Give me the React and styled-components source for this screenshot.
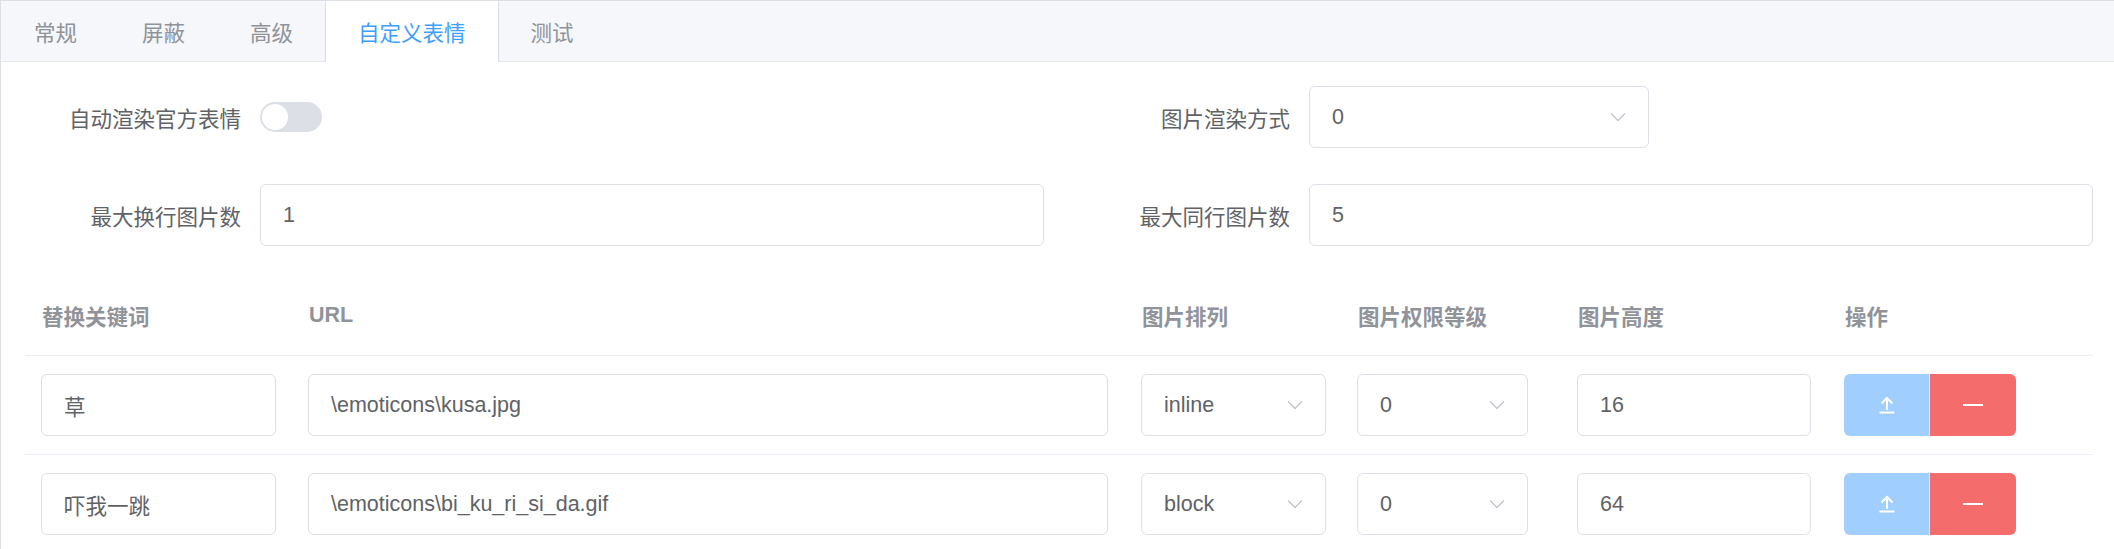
import React from 'react';
import styled, { createGlobalStyle } from 'styled-components';

const GlobalStyle = createGlobalStyle`
  html, body {
    margin: 0;
    padding: 0;
    overflow: hidden;
    background: #fff;
    font-family: "Liberation Sans", "Noto Sans CJK SC", sans-serif;
  }
`;

const Card = styled.div`
  border: 1px solid #dcdfe6;
  border-right: none;
  background: #fff;
`;

const TabBar = styled.div`
  display: flex;
  height: 60px;
  background: #f5f7fa;
  border-bottom: 1px solid #e4e7ed;
`;

const Tab = styled.div`
  display: flex;
  align-items: center;
  padding: 0 32px;
  height: ${p => (p.$active ? '61px' : '60px')};
  margin-left: -1px;
  border-left: 1px solid ${p => (p.$active ? '#dcdfe6' : 'transparent')};
  border-right: 1px solid ${p => (p.$active ? '#dcdfe6' : 'transparent')};
  background: ${p => (p.$active ? '#fff' : 'transparent')};
  color: ${p => (p.$active ? '#409eff' : '#909399')};
  font-size: 21.5px;
  &:first-child {
    margin-left: 0;
  }
`;

const Content = styled.div`
  padding: 24px 21px 0 24px;
`;

const FormGrid = styled.div`
  display: grid;
  grid-template-columns: 1fr 1fr;
  column-gap: 30px;
  row-gap: 36px;
`;

const FormItem = styled.div`
  display: flex;
  align-items: center;
  height: 62px;
`;

const Label = styled.label`
  width: 235px;
  flex-shrink: 0;
  box-sizing: border-box;
  padding-right: 19px;
  text-align: right;
  color: #606266;
  font-size: 21.5px;
`;

const Field = styled.div`
  display: flex;
  align-items: center;
  box-sizing: border-box;
  height: 62px;
  width: ${p => (p.$width ? `${p.$width}px` : 'auto')};
  flex: ${p => (p.$width ? 'none' : '1')};
  border: 1px solid #dcdfe6;
  border-radius: 6px;
  padding: 0 22px;
  color: #606266;
  font-size: 21.5px;
  background: #fff;
`;

const Value = styled.span`
  flex: 1;
  white-space: nowrap;
`;

const Switch = styled.div`
  position: relative;
  width: 62px;
  height: 30px;
  border-radius: 15px;
  background: #dcdfe6;
  &::after {
    content: '';
    position: absolute;
    left: 2px;
    top: 2px;
    width: 26px;
    height: 26px;
    border-radius: 50%;
    background: #fff;
  }
`;

const Table = styled.div`
  margin-top: 30px;
`;

const cols = '267px 833px 216px 220px 267px 1fr';

const HeadRow = styled.div`
  display: grid;
  grid-template-columns: ${cols};
  align-items: center;
  height: 79px;
  border-bottom: 1px solid #ebeef5;
`;

const HeadCell = styled.div`
  padding-left: 17px;
  color: #909399;
  font-weight: bold;
  font-size: 21.5px;
`;

const Row = styled.div`
  display: grid;
  grid-template-columns: ${cols};
  align-items: center;
  height: 98px;
  border-bottom: 1px solid #ebeef5;
`;

const Cell = styled.div`
  padding-left: 16px;
`;

const ButtonGroup = styled.div`
  display: flex;
  height: 62px;
`;

const ActionButton = styled.div`
  display: flex;
  align-items: center;
  justify-content: center;
  width: 86px;
  height: 62px;
  background: ${p => (p.$danger ? '#f56c6c' : '#a0cfff')};
  border-radius: ${p => (p.$danger ? '0 6px 6px 0' : '6px 0 0 6px')};
  border-right: ${p => (p.$danger ? 'none' : '1px solid rgba(255,255,255,0.5)')};
  box-sizing: border-box;
`;

const Chevron = () => (
  <svg width="16" height="10" viewBox="0 0 16 10">
    <path d="M1 1.5 L8 8.5 L15 1.5" fill="none" stroke="#c0c4cc" strokeWidth="1.3" />
  </svg>
);

const UploadIcon = () => (
  <svg width="18" height="18" viewBox="0 0 18 18">
    <path d="M9 14 V2 M3.5 7.5 L9 2 L14.5 7.5" fill="none" stroke="#fff" strokeWidth="2" />
    <path d="M1.5 16.5 H16.5" stroke="#fff" strokeWidth="2" />
  </svg>
);

const MinusIcon = () => (
  <svg width="20" height="4" viewBox="0 0 20 4">
    <path d="M0 2 H20" stroke="#fff" strokeWidth="2" />
  </svg>
);

const Select = ({ value, width }) => (
  <Field $width={width}>
    <Value>{value}</Value>
    <Chevron />
  </Field>
);

const Input = ({ value, width }) => (
  <Field $width={width}>
    <Value>{value}</Value>
  </Field>
);

const tabs = ['常规', '屏蔽', '高级', '自定义表情', '测试'];

const emoticons = [
  { keyword: '草', url: '\\emoticons\\kusa.jpg', layout: 'inline', level: '0', height: '16' },
  { keyword: '吓我一跳', url: '\\emoticons\\bi_ku_ri_si_da.gif', layout: 'block', level: '0', height: '64' },
];

export default function App() {
  return (
    <>
      <GlobalStyle />
      <Card>
        <TabBar>
          {tabs.map(t => (
            <Tab key={t} $active={t === '自定义表情'}>{t}</Tab>
          ))}
        </TabBar>
        <Content>
          <FormGrid>
            <FormItem>
              <Label>自动渲染官方表情</Label>
              <Switch />
            </FormItem>
            <FormItem>
              <Label>图片渲染方式</Label>
              <Select value="0" width={340} />
            </FormItem>
            <FormItem>
              <Label>最大换行图片数</Label>
              <Input value="1" />
            </FormItem>
            <FormItem>
              <Label>最大同行图片数</Label>
              <Input value="5" />
            </FormItem>
          </FormGrid>

          <Table>
            <HeadRow>
              <HeadCell>替换关键词</HeadCell>
              <HeadCell>URL</HeadCell>
              <HeadCell>图片排列</HeadCell>
              <HeadCell>图片权限等级</HeadCell>
              <HeadCell>图片高度</HeadCell>
              <HeadCell>操作</HeadCell>
            </HeadRow>
            {emoticons.map(e => (
              <Row key={e.keyword}>
                <Cell><Input value={e.keyword} width={235} /></Cell>
                <Cell><Input value={e.url} width={800} /></Cell>
                <Cell><Select value={e.layout} width={185} /></Cell>
                <Cell><Select value={e.level} width={171} /></Cell>
                <Cell><Input value={e.height} width={234} /></Cell>
                <Cell>
                  <ButtonGroup>
                    <ActionButton><UploadIcon /></ActionButton>
                    <ActionButton $danger><MinusIcon /></ActionButton>
                  </ButtonGroup>
                </Cell>
              </Row>
            ))}
          </Table>
        </Content>
      </Card>
    </>
  );
}
